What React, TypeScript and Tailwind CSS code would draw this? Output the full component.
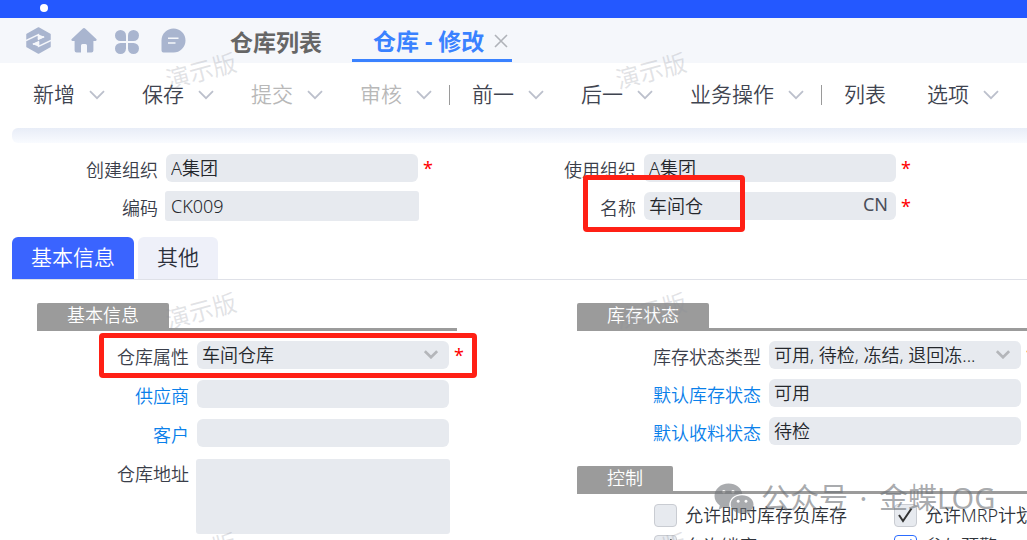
import type { ReactNode } from "react";
import clsx from "clsx";

type ToolItem = { text: string; menu?: boolean; disabled?: boolean };

const toolGroups: ToolItem[][] = [
  [
    { text: "新增", menu: true },
    { text: "保存", menu: true },
    { text: "提交", menu: true, disabled: true },
    { text: "审核", menu: true, disabled: true },
  ],
  [
    { text: "前一", menu: true },
    { text: "后一", menu: true },
    { text: "业务操作", menu: true },
  ],
  [{ text: "列表" }, { text: "选项", menu: true }],
];

const fieldBox = "h-7 w-[252px] rounded-md bg-[#e7eaef] pl-[5px] text-lg leading-7 text-[#24272c] outline-none";

const Chevron = ({ className }: { className?: string }) => (
  <svg viewBox="0 0 16 10" fill="none" stroke="currentColor" className={className}>
    <path d="M1 1.2 L8 8.2 L15 1.2" />
  </svg>
);

const Required = () => <span className="ml-[5px] h-7 text-lg leading-7 font-normal text-[#ff0000]">*</span>;

const Field = ({
  id,
  label,
  link,
  labelWidth,
  children,
}: {
  id: string;
  label: string;
  link?: boolean;
  labelWidth: string;
  children: ReactNode;
}) => (
  <div className="relative flex">
    <label htmlFor={id} className={clsx("mr-2 shrink-0 pt-1 text-right text-lg leading-6 text-[#3a3e4a]", labelWidth)}>
      {link ? (
        <a href="#" className="text-[#0a80ea]">
          {label}
        </a>
      ) : (
        label
      )}
    </label>
    {children}
  </div>
);

const SelectBox = ({ id, value }: { id: string; value: string }) => (
  <div className="relative">
    <select id={id} className={clsx(fieldBox, "block appearance-none pr-9")}>
      <option>{value}</option>
    </select>
    <Chevron className="pointer-events-none absolute top-[9px] right-[11px] h-[9px] w-[14px] stroke-3 text-[#b4b6ba]" />
  </div>
);

const Section = ({ title, children }: { title: string; children: ReactNode }) => (
  <section>
    <div className="flex border-b-3 border-[#9b9b9b]">
      <h2 className="-mb-[3px] h-7 rounded-t-xs bg-[#9b9b9b] px-[30px] text-lg leading-6 text-white">{title}</h2>
    </div>
    {children}
  </section>
);

const Check = ({ id, label, checked, active }: { id: string; label: string; checked?: boolean; active?: boolean }) => (
  <div className="flex items-center">
    <span className="relative mr-2 size-[23px] shrink-0">
      <input
        id={id}
        type="checkbox"
        defaultChecked={checked}
        className={clsx(
          "peer block size-[23px] appearance-none rounded border",
          active ? "border-[#2b6cff] bg-white" : "border-[#c9ccd2] bg-[#e7eaef]",
        )}
      />
      <svg
        viewBox="0 0 23 23"
        fill="none"
        stroke="currentColor"
        className={clsx(
          "pointer-events-none absolute inset-0 hidden stroke-2 peer-checked:block",
          active ? "text-[#2b6cff]" : "text-[#333]",
        )}
      >
        <path d="M5 11 L9 17 L17.5 4.5" />
      </svg>
    </span>
    <label htmlFor={id} className="text-lg leading-[23px] whitespace-nowrap text-[#2f333a]">
      {label}
    </label>
  </div>
);

const DemoMark = ({ className }: { className: string }) => (
  <span className={clsx("absolute -rotate-[15deg] text-2xl leading-7 font-normal text-[#8a8e99]/25", className)}>
    演示版
  </span>
);

const NavIcons = () => (
  <nav className="flex text-[#a9b5cf]">
    <button aria-label="Cloud">
      <svg viewBox="0 0 25 27" className="h-[27px] w-[25px]">
        <path
          fill="currentColor"
          stroke="currentColor"
          strokeWidth="1.5"
          strokeLinejoin="round"
          d="M12.5 1 L24 7.3 V19.7 L12.5 26 L1 19.7 V7.3 Z"
        />
        <path
          fill="none"
          stroke="#f5f7fb"
          strokeWidth="1.5"
          d="M0 13.6 L12.4 7.6 V11.4 L18 9.8 M25 13.4 L12.6 19.4 V15.6 L7 17.2"
        />
        <path fill="#f5f7fb" d="M12 7.2 L18.8 10 L12 13.2 Z M13 19.8 L6.2 17 L13 13.8 Z" />
      </svg>
    </button>
    <button aria-label="首页" className="ml-5">
      <svg viewBox="0 0 26 25" className="h-[25px] w-[26px]" fill="currentColor">
        <path d="M11.6 0.8 a2 2 0 0 1 2.8 0 L25.3 11 a1.2 1.2 0 0 1 -.8 2 H22.4 V22.5 a2 2 0 0 1 -2 2 H16 V17.5 a1.5 1.5 0 0 0 -1.5 -1.5 H11.5 a1.5 1.5 0 0 0 -1.5 1.5 V24.5 H5.6 a2 2 0 0 1 -2 -2 V13 H1.5 a1.2 1.2 0 0 1 -.8 -2 Z" />
      </svg>
    </button>
    <button aria-label="应用" className="ml-[18px]">
      <svg viewBox="0 0 24 24" className="mt-[2px] size-6" fill="currentColor">
        <path d="M5.5 0 a5.5 5.5 0 0 1 5.5 5.5 V11 H5.5 a5.5 5.5 0 0 1 0 -11 Z" />
        <path d="M18.5 0 a5.5 5.5 0 0 1 0 11 H13 V5.5 a5.5 5.5 0 0 1 5.5 -5.5 Z" />
        <path d="M5.5 13 H11 V18.5 a5.5 5.5 0 1 1 -5.5 -5.5 Z" />
        <path d="M13 13 H18.5 a5.5 5.5 0 1 1 -5.5 5.5 Z" />
      </svg>
    </button>
    <button aria-label="消息" className="ml-[22px]">
      <svg viewBox="0 0 25 25" className="size-[25px]">
        <path fill="currentColor" d="M12.5 0.5 a12 12 0 0 1 0 24 H2.5 a2 2 0 0 1 -2 -2 V12.5 a12 12 0 0 1 12 -12 Z" />
        <path stroke="#f5f7fb" strokeWidth="1.6" d="M7 10.3 H17.5 M7 15 H14.5" />
      </svg>
    </button>
  </nav>
);

const AccountMark = () => (
  <div className="pointer-events-none absolute top-[480px] left-[714px] flex items-center gap-[7px] text-[#6f7378]/60">
    <svg viewBox="0 0 40 31" className="h-[31px] w-10" fill="currentColor" fillRule="evenodd">
      <path d="M14.5 0.5 C22 0.5 27.5 5 28.3 11 C20.5 11 15 16 15.3 22.5 C15.4 23.3 15.6 24.2 15.9 25 C13.5 25.2 11.3 24.9 9.3 24.2 L4.6 26.8 L5.8 22.4 C2.5 20.3 0.5 16.9 0.5 13 C0.5 6 6.7 0.5 14.5 0.5 Z M9.8 7 a1.7 1.7 0 1 0 0.01 0 Z M19 7 a1.7 1.7 0 1 0 0.01 0 Z" />
      <path d="M28 12.3 C34.5 12.3 39.5 16.3 39.5 21.4 C39.5 24.4 37.8 26.9 35.3 28.5 L36.2 31 L32.6 29.7 C31.2 30.2 29.6 30.5 28 30.5 C21.6 30.5 16.7 26.4 16.7 21.4 C16.7 16.3 21.6 12.3 28 12.3 Z M24.2 16.7 a1.5 1.5 0 1 0 0.01 0 Z M32 16.7 a1.5 1.5 0 1 0 0.01 0 Z" />
    </svg>
    <span className="text-[29px] leading-9 font-normal whitespace-nowrap">
      公众号<span className="mx-1"> · </span>金蝶LOG
    </span>
  </div>
);

export default function App() {
  return (
    <div className="relative flex h-screen flex-col overflow-hidden bg-white font-['Noto_Sans','Noto_Sans_CJK_SC',sans-serif] font-[350]">
      <div className="h-[18px] shrink-0 bg-[#2458ff] pt-1 pl-10">
        <div className="size-2 rounded-full bg-white" />
      </div>

      <header className="flex h-[45px] shrink-0 bg-[#f5f7fb] pl-[26px]">
        <div className="pt-[9px]">
          <NavIcons />
        </div>
        <div className="ml-6 flex text-[23px] leading-[48px] font-bold whitespace-nowrap">
          <button className="px-5 text-[#666]">仓库列表</button>
          <div className="ml-[10px] flex h-11 items-center border-b-3 border-[#3a82ff] pr-1 pl-[21px]">
            <button className="pt-1 text-[#3a82ff]">仓库 - 修改</button>
            <button aria-label="关闭" className="ml-[10px] pt-1">
              <svg viewBox="0 0 14 14" className="size-[14px]" stroke="#b0b3b9" strokeWidth="1.6">
                <path d="M1 1 L13 13 M13 1 L1 13" />
              </svg>
            </button>
          </div>
        </div>
      </header>

      <div className="flex h-[65px] shrink-0 items-center pb-[2px] pl-[33px] text-[21px] whitespace-nowrap">
        {toolGroups.map((group, i) => (
          <div key={i} className="flex items-center">
            {i > 0 && <span className="mr-[22px] ml-[17px] h-5 w-px bg-[#9a9a9a]" />}
            <div className="flex gap-[37px]">
              {group.map((item) => (
                <button
                  key={item.text}
                  disabled={item.disabled}
                  className={clsx("flex items-center", item.disabled ? "text-[#b8b8b8]" : "text-[#3f4450]", !item.menu && "pr-1")}
                >
                  {item.text}
                  {item.menu && <Chevron className="ml-[14px] h-[10px] w-4 stroke-[1.8] text-[#bcc0cc]" />}
                </button>
              ))}
            </div>
          </div>
        ))}
      </div>

      <div className="ml-3 h-[15px] shrink-0 rounded-l-md bg-linear-to-b from-[#e8edf7] to-[#f9fbff]" />

      <div className="grid shrink-0 grid-cols-[478px_1fr] gap-y-[10px] pt-[11px]">
        <Field id="createOrg" label="创建组织" labelWidth="w-[158px]">
          <input id="createOrg" className={fieldBox} defaultValue="A集团" />
          <Required />
        </Field>
        <Field id="useOrg" label="使用组织" labelWidth="w-[158px]">
          <input id="useOrg" className={fieldBox} defaultValue="A集团" />
          <Required />
        </Field>
        <Field id="code" label="编码" labelWidth="w-[158px]">
          <input id="code" className={clsx(fieldBox, "rounded-xs ring-1 ring-[#e7eaef]")} defaultValue="CK009" />
        </Field>
        <Field id="name" label="名称" labelWidth="w-[158px]">
          <div className="relative">
            <input id="name" className={clsx(fieldBox, "block pr-10")} defaultValue="车间仓" />
            <span className="absolute top-0 right-2 text-lg leading-6 font-normal text-[#4a4e5a]">CN</span>
          </div>
          <Required />
          <div className="pointer-events-none absolute -top-[17px] left-[105px] h-[57px] w-[162px] rounded border-5 border-[#ff2015]" />
        </Field>
      </div>

      <div className="mt-[17px] ml-3 flex shrink-0 gap-1 border-b border-[#dfe1e8] text-[21px]">
        <button className="h-[42px] rounded-t-md bg-[#3a64ff] px-[19px] text-white">基本信息</button>
        <button className="h-[42px] rounded-t-md bg-[#eef0f9] px-[19px] text-[#2b2f3a]">其他</button>
      </div>

      <main className="grid grid-cols-[420px_1fr] gap-[120px] pt-[23px] pl-[37px]">
        <Section title="基本信息">
          <div className="flex flex-col gap-[11px] pt-[10px]">
            <Field id="attr" label="仓库属性" labelWidth="w-[152px]">
              <SelectBox id="attr" value="车间仓库" />
              <Required />
              <div className="pointer-events-none absolute -top-2 left-[62px] h-[45px] w-[378px] rounded border-5 border-[#ff2015]" />
            </Field>
            <Field id="supplier" label="供应商" link labelWidth="w-[152px]">
              <input id="supplier" className={fieldBox} />
            </Field>
            <Field id="customer" label="客户" link labelWidth="w-[152px]">
              <input id="customer" className={fieldBox} />
            </Field>
            <Field id="address" label="仓库地址" labelWidth="w-[152px]">
              <textarea
                id="address"
                className="mt-[2px] block h-[73px] w-[252px] resize-none rounded-xs bg-[#e7eaef] px-[5px] text-lg ring-1 ring-[#e7eaef] outline-none"
              />
            </Field>
          </div>
        </Section>

        <div>
          <Section title="库存状态">
            <div className="flex flex-col gap-[10px] pt-[10px]">
              <Field id="statusType" label="库存状态类型" labelWidth="w-[184px]">
                <SelectBox id="statusType" value="可用, 待检, 冻结, 退回冻..." />
                <Required />
              </Field>
              <Field id="stockStatus" label="默认库存状态" link labelWidth="w-[184px]">
                <input id="stockStatus" className={fieldBox} defaultValue="可用" />
              </Field>
              <Field id="receiveStatus" label="默认收料状态" link labelWidth="w-[184px]">
                <input id="receiveStatus" className={fieldBox} defaultValue="待检" />
              </Field>
            </div>
          </Section>
          <div className="mt-[21px]">
            <Section title="控制">
              <div className="grid grid-cols-[240px_1fr] gap-y-2 pt-[10px] pl-[77px]">
                <Check id="negative" label="允许即时库存负库存" />
                <Check id="mrp" label="允许MRP计划" checked />
                <Check id="lock" label="允许锁库" checked />
                <Check id="warn" label="参与预警" checked active />
              </div>
            </Section>
          </div>
        </div>
      </main>

      <div className="pointer-events-none absolute inset-0 overflow-hidden">
        <DemoMark className="top-[57px] left-[165px]" />
        <DemoMark className="top-[57px] left-[615px]" />
        <DemoMark className="top-[297px] left-[165px]" />
        <DemoMark className="top-[297px] left-[615px]" />
        <DemoMark className="top-[537px] left-[165px]" />
        <DemoMark className="top-[537px] left-[615px]" />
      </div>
      <AccountMark />
    </div>
  );
}
